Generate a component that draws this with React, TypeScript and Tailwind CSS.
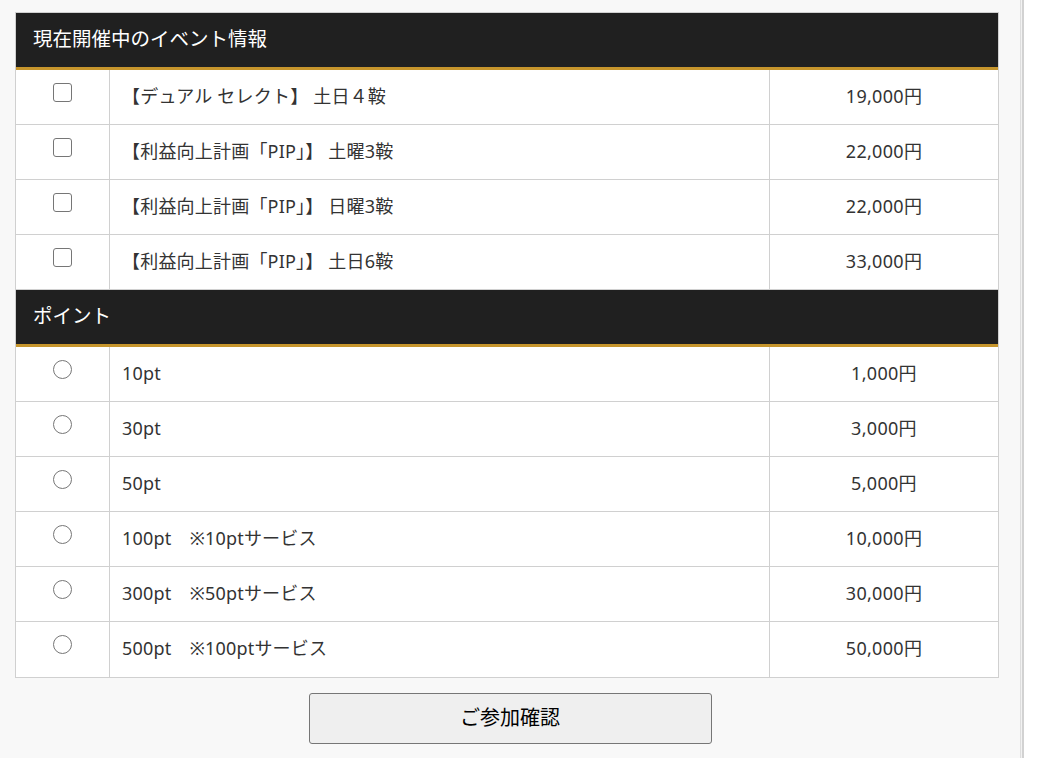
import { useState } from 'react';

const EVENTS = [
  { label: '【デュアル セレクト】 土日４鞍', price: '19,000円' },
  { label: '【利益向上計画「PIP」】 土曜3鞍', price: '22,000円' },
  { label: '【利益向上計画「PIP」】 日曜3鞍', price: '22,000円' },
  { label: '【利益向上計画「PIP」】 土日6鞍', price: '33,000円' },
];

const POINTS = [
  { label: '10pt', price: '1,000円' },
  { label: '30pt', price: '3,000円' },
  { label: '50pt', price: '5,000円' },
  { label: '100pt　※10ptサービス', price: '10,000円' },
  { label: '300pt　※50ptサービス', price: '30,000円' },
  { label: '500pt　※100ptサービス', price: '50,000円' },
];

function SectionHeader({ title }: { title: string }) {
  return (
    <div className="flex h-[57px] items-center border-b-[3px] border-[#c6952c] bg-[#202020] pb-[2px] pl-[17px] text-[19.5px] text-white">
      {title}
    </div>
  );
}

function Row({
  label,
  price,
  kind,
  last,
}: {
  label: string;
  price: string;
  kind: 'check' | 'radio';
  last?: boolean;
}) {
  return (
    <div
      className={`grid h-[55px] grid-cols-[94px_660px_228px] ${last ? '' : 'border-b border-[#d0d0d0]'}`}
    >
      <div className="flex justify-center border-r border-[#d0d0d0] pt-[13px]">
        {kind === 'check' ? (
          <span className="h-[19px] w-[19px] rounded-[3px] border border-[#767676] bg-white" />
        ) : (
          <span className="h-[19px] w-[19px] rounded-full border border-[#767676] bg-white" />
        )}
      </div>
      <div className="flex items-center border-r border-[#d0d0d0] pb-[2px] pl-[12px] tracking-[0.2px]">{label}</div>
      <div className="flex items-center justify-center pb-[2px] tracking-[0.3px]">{price}</div>
    </div>
  );
}

export default function App() {
  const [selected, setSelected] = useState<string | null>(null);

  return (
    <div
      className="flex min-h-[758px] bg-white text-[18px] text-[#333]"
      style={{ fontFamily: '"Noto Sans", "Noto Sans CJK JP", sans-serif' }}
    >
      <div className="flex w-[1020px] flex-col bg-[#f8f8f8] pt-[12px]">
        <div className="ml-[15px] w-[984px] border border-[#d0d0d0] bg-white">
          <SectionHeader title="現在開催中のイベント情報" />
          {EVENTS.map((e) => (
            <Row key={e.label} label={e.label} price={e.price} kind="check" />
          ))}
          <SectionHeader title="ポイント" />
          {POINTS.map((p, i) => (
            <Row key={p.label} label={p.label} price={p.price} kind="radio" last={i === POINTS.length - 1} />
          ))}
        </div>

        <div className="mt-[15px] flex justify-center">
          <button
            onClick={() => setSelected(selected)}
            className="h-[51px] w-[403px] rounded-[3px] border border-[#767676] bg-[#efefef] pb-[2px] text-[20px] text-black"
          >
            ご参加確認
          </button>
        </div>
      </div>

      <div className="w-px bg-[#dedede]" />
      <div className="w-px bg-[#f2f2f2]" />
      <div className="w-[2px] bg-[#d2d2d2]" />
      <div className="flex-1 bg-white" />
    </div>
  );
}
